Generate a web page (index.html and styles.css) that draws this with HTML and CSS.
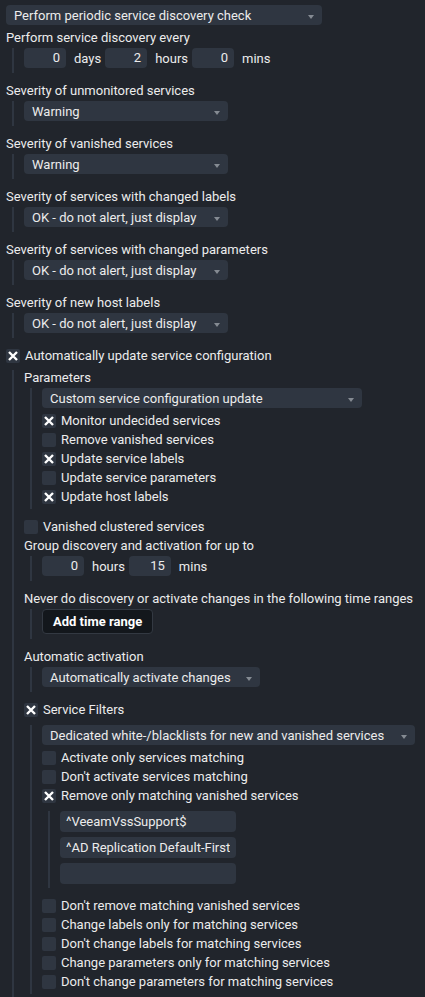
FILE: index.html
```html
<!DOCTYPE html>
<html lang="en">
<head>
<meta charset="utf-8">
<title>Service discovery</title>
<link rel="stylesheet" href="styles.css">
</head>
<body>
<div class="page">
  <div class="select w-top"><span>Perform periodic service discovery check</span><i class="arrow"></i></div>

  <div class="field first">
    <div class="label">Perform service discovery every</div>
    <div class="indent">
      <div class="nums">
        <span class="num">0</span><span class="unit">days</span>
        <span class="num">2</span><span class="unit">hours</span>
        <span class="num">0</span><span class="unit">mins</span>
      </div>
    </div>
  </div>

  <div class="field">
    <div class="label">Severity of unmonitored services</div>
    <div class="indent"><div class="select w-sev"><span>Warning</span><i class="arrow"></i></div></div>
  </div>
  <div class="field">
    <div class="label">Severity of vanished services</div>
    <div class="indent"><div class="select w-sev"><span>Warning</span><i class="arrow"></i></div></div>
  </div>
  <div class="field">
    <div class="label">Severity of services with changed labels</div>
    <div class="indent"><div class="select w-sev"><span>OK - do not alert, just display</span><i class="arrow"></i></div></div>
  </div>
  <div class="field">
    <div class="label">Severity of services with changed parameters</div>
    <div class="indent"><div class="select w-sev"><span>OK - do not alert, just display</span><i class="arrow"></i></div></div>
  </div>
  <div class="field">
    <div class="label">Severity of new host labels</div>
    <div class="indent"><div class="select w-sev"><span>OK - do not alert, just display</span><i class="arrow"></i></div></div>
  </div>

  <div class="cb head"><span class="box on"><svg viewBox="0 0 14 14"><path d="M3 3 L11 11 M11 3 L3 11"/></svg></span>Automatically update service configuration</div>

  <div class="indent outer">
    <div class="label">Parameters</div>
    <div class="indent tight">
      <div class="select w-custom"><span>Custom service configuration update</span><i class="arrow"></i></div>
      <div class="cblist">
        <div class="cb"><span class="box on"><svg viewBox="0 0 14 14"><path d="M3 3 L11 11 M11 3 L3 11"/></svg></span>Monitor undecided services</div>
        <div class="cb"><span class="box"></span>Remove vanished services</div>
        <div class="cb"><span class="box on"><svg viewBox="0 0 14 14"><path d="M3 3 L11 11 M11 3 L3 11"/></svg></span>Update service labels</div>
        <div class="cb"><span class="box"></span>Update service parameters</div>
        <div class="cb"><span class="box on"><svg viewBox="0 0 14 14"><path d="M3 3 L11 11 M11 3 L3 11"/></svg></span>Update host labels</div>
      </div>
    </div>

    <div class="cb single"><span class="box"></span>Vanished clustered services</div>

    <div class="field group">
      <div class="label">Group discovery and activation for up to</div>
      <div class="indent">
        <div class="nums">
          <span class="num">0</span><span class="unit">hours</span>
          <span class="num">15</span><span class="unit">mins</span>
        </div>
      </div>
    </div>

    <div class="field">
      <div class="label">Never do discovery or activate changes in the following time ranges</div>
      <div class="indent">
        <div class="btn">Add time range</div>
      </div>
    </div>

    <div class="field">
      <div class="label">Automatic activation</div>
      <div class="indent"><div class="select w-auto"><span>Automatically activate changes</span><i class="arrow"></i></div></div>
    </div>

    <div class="cb head2"><span class="box on"><svg viewBox="0 0 14 14"><path d="M3 3 L11 11 M11 3 L3 11"/></svg></span>Service Filters</div>

    <div class="indent filters">
      <div class="select w-ded"><span>Dedicated white-/blacklists for new and vanished services</span><i class="arrow"></i></div>
      <div class="cblist">
        <div class="cb"><span class="box"></span>Activate only services matching</div>
        <div class="cb"><span class="box"></span>Don't activate services matching</div>
        <div class="cb"><span class="box on"><svg viewBox="0 0 14 14"><path d="M3 3 L11 11 M11 3 L3 11"/></svg></span>Remove only matching vanished services</div>
      </div>
      <div class="indent regex">
        <div class="ti"><span>^VeeamVssSupport$</span></div>
        <div class="ti"><span>^AD Replication Default-First-Site-Name$</span></div>
        <div class="ti"><span></span></div>
      </div>
      <div class="cblist after">
        <div class="cb"><span class="box"></span>Don't remove matching vanished services</div>
        <div class="cb"><span class="box"></span>Change labels only for matching services</div>
        <div class="cb"><span class="box"></span>Don't change labels for matching services</div>
        <div class="cb"><span class="box"></span>Change parameters only for matching services</div>
        <div class="cb"><span class="box"></span>Don't change parameters for matching services</div>
      </div>
    </div>
  </div>
</div>
</body>
</html>
```

FILE: styles.css
```css
* { box-sizing: border-box; }
html, body { margin: 0; background: #21252c; }
body {
  font-family: Roboto, "Liberation Sans", sans-serif;
  font-size: 13px;
  color: #ececec;
  overflow: hidden;
}
.page { padding: 5px 6px 0 6px; height: 997px; overflow: hidden; }

.select {
  display: flex;
  align-items: center;
  justify-content: space-between;
  height: 20px;
  background: #2f3641;
  border-radius: 4px;
  padding: 0 8px;
  white-space: nowrap;
}
.arrow {
  display: block;
  width: 0; height: 0;
  border-left: 3.5px solid transparent;
  border-right: 3.5px solid transparent;
  border-top: 4px solid #858b93;
  margin-top: 3px;
  flex: none;
}
.w-top { width: 316px; }
.w-sev { width: 204px; }
.w-custom { width: 320px; }
.w-auto { width: 218px; }
.w-ded { width: 373px; }

.field { margin-top: 10px; }
.field.first { margin-top: 5px; }
.field.group { margin-top: 2px; }
.label { line-height: 15px; height: 15px; margin-bottom: 3px; white-space: nowrap; }

.indent {
  margin-left: 6px;
  border-left: 2px solid #2f3641;
  padding-left: 10px;
  padding-bottom: 5px;
}
.indent.tight { padding-bottom: 3px; }
.indent.outer { margin-top: 5px; padding-bottom: 40px; }
.indent.filters { margin-top: 6px; padding-bottom: 3px; }
.indent.regex { margin-top: 6px; padding-bottom: 4px; display: flex; flex-direction: column; gap: 5px; }

.nums { display: flex; align-items: center; height: 20px; }
.num {
  width: 42px; height: 20px;
  background: #2f3641;
  border-radius: 4px;
  text-align: right;
  padding-right: 6px;
  line-height: 20px;
}
.unit { margin: 0 4px 0 8px; }

.cblist { margin-top: 3px; }
.cblist.after { margin-top: 8px; }
.cb { display: flex; align-items: center; height: 19px; white-space: nowrap; }
.cb.head { margin-top: 8px; }
.cb.single { margin-top: 8px; }
.cb.head2 { margin-top: 8px; }
.box {
  width: 14px; height: 14px;
  background: #2f3641;
  border-radius: 2px;
  margin-right: 5px;
  flex: none;
  display: flex;
}
.box svg { width: 14px; height: 14px; }
.box svg path { stroke: #ffffff; stroke-width: 2.4; fill: none; }

.btn {
  display: inline-flex;
  align-items: center;
  height: 25px;
  padding: 0 10px;
  background: #13171c;
  border: 1px solid #333942;
  border-radius: 4px;
  color: #ffffff;
  font-weight: bold;
}

.ti {
  width: 176px; height: 21px;
  background: #2f3641;
  border-radius: 4px;
  padding: 0 6px;
  display: flex;
  align-items: center;
}
.ti span { display: block; overflow: hidden; white-space: nowrap; width: 100%; }
```
